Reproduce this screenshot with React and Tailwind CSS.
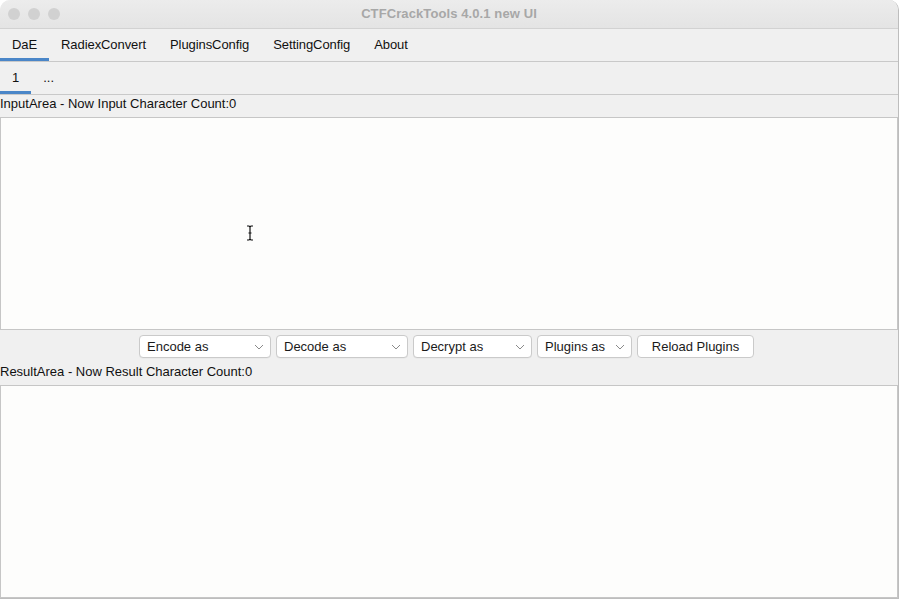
import React from "react";

function Chevron() {
  return (
    <svg width="10" height="6" viewBox="0 0 10 6" className="shrink-0">
      <path d="M1 1 L5 5 L9 1" fill="none" stroke="#8a8a8a" strokeWidth="1" />
    </svg>
  );
}

function Select({ label, w }) {
  return (
    <div
      className={`${w} h-[23px] bg-white border border-[#cacaca] rounded-[4px] flex items-center justify-between pl-[7px] pr-[6px] pt-[1px] text-[13px] text-[#1a1a1a] shadow-[0_0.5px_0_rgba(0,0,0,0.05)]`}
    >
      <span>{label}</span>
      <Chevron />
    </div>
  );
}

export default function App() {
  const tabs = ["DaE", "RadiexConvert", "PluginsConfig", "SettingConfig", "About"];
  return (
    <div className="w-[900px] h-[600px] bg-white" style={{ fontFamily: '"Liberation Sans", Arial, sans-serif' }}>
      <div className="w-[899px] h-[599px] bg-[#f0f0f0] rounded-t-[10px] overflow-hidden flex flex-col border-r border-b border-[#bdbdbd]">
        {/* Title bar */}
        <div className="h-[29px] shrink-0 bg-gradient-to-b from-[#ececec] to-[#e4e4e4] border-b border-[#d2d2d2] grid grid-cols-[1fr_auto_1fr] items-center">
          <div className="flex items-center gap-[8px] pl-[8px]">
            <div className="w-[12px] h-[12px] rounded-full bg-[#d1d1d1]" />
            <div className="w-[12px] h-[12px] rounded-full bg-[#d1d1d1]" />
            <div className="w-[12px] h-[12px] rounded-full bg-[#d1d1d1]" />
          </div>
          <div className="text-[13px] font-bold text-[#a7a7a7] tracking-[0.1px]">CTFCrackTools 4.0.1 new UI</div>
          <div />
        </div>

        {/* Main tabs */}
        <div className="h-[33px] shrink-0 border-b border-[#c9c9c9] flex items-stretch">
          {tabs.map((t, i) => (
            <div key={t} className="relative px-3 flex items-center text-[13px] tracking-[-0.08px] text-[#111] pb-[1px]">
              {t}
              {i === 0 && <div className="absolute left-0 right-0 bottom-[0px] h-[3px] bg-[#4a86c8]" />}
            </div>
          ))}
        </div>

        {/* Sub tabs */}
        <div className="h-[33px] shrink-0 border-b border-[#c9c9c9] flex items-stretch">
          <div className="relative px-3 flex items-center text-[13px] text-[#111] pb-[1px]">
            1
            <div className="absolute left-0 right-0 bottom-0 h-[3px] bg-[#4a86c8]" />
          </div>
          <div className="px-3 flex items-center text-[13px] text-[#111] pb-[1px]">...</div>
        </div>

        {/* Input label */}
        <div className="h-[22px] shrink-0 flex items-center text-[13px] text-[#111] pb-[4px]">
          InputArea - Now Input Character Count:0
        </div>

        {/* Input area */}
        <div className="relative h-[213px] shrink-0 bg-[#fdfdfc] border border-[#c6c6c6]">
          <svg className="absolute left-[244px] top-[107px]" width="10" height="16" viewBox="0 0 10 16">
            <path d="M2 1 H4 L5 2 L6 1 H8 M5 2 V14 M2 15 H4 L5 14 L6 15 H8 M3.5 8 H6.5" fill="none" stroke="#111" strokeWidth="1.2" />
          </svg>
        </div>

        {/* Toolbar */}
        <div className="h-[32px] shrink-0 flex items-center justify-center gap-[5px] pr-[5px]">
          <Select label="Encode as" w="w-[132px]" />
          <Select label="Decode as" w="w-[132px]" />
          <Select label="Decrypt as" w="w-[119px]" />
          <Select label="Plugins as" w="w-[95px]" />
          <div className="w-[117px] h-[23px] bg-white border border-[#cacaca] rounded-[4px] flex items-center justify-center pt-[1px] text-[13px] text-[#1a1a1a]">
            Reload Plugins
          </div>
        </div>

        {/* Result label */}
        <div className="h-[23px] shrink-0 flex items-center text-[13px] text-[#111] pb-[4px]">
          ResultArea - Now Result Character Count:0
        </div>

        {/* Result area */}
        <div className="h-[213px] shrink-0 bg-[#fdfdfc] border border-[#c6c6c6]" />
      </div>
    </div>
  );
}
